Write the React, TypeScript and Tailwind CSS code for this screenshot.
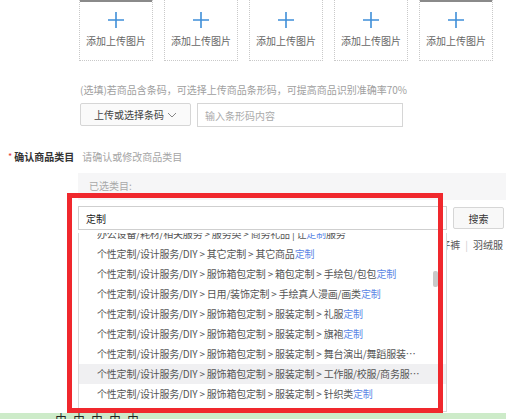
const rows = [
  { text: "办公设备/耗材/相关服务 > 服务类 > 商务礼品 | 让", hl: "定制", tail: "服务" },
  { text: "个性定制/设计服务/DIY > 其它定制 > 其它商品", hl: "定制" },
  { text: "个性定制/设计服务/DIY > 服饰箱包定制 > 箱包定制 > 手绘包/包包", hl: "定制" },
  { text: "个性定制/设计服务/DIY > 日用/装饰定制 > 手绘真人漫画/画类", hl: "定制" },
  { text: "个性定制/设计服务/DIY > 服饰箱包定制 > 服装定制 > 礼服", hl: "定制" },
  { text: "个性定制/设计服务/DIY > 服饰箱包定制 > 服装定制 > 旗袍", hl: "定制" },
  { text: "个性定制/设计服务/DIY > 服饰箱包定制 > 服装定制 > 舞台演出/舞蹈服装定制" },
  { text: "个性定制/设计服务/DIY > 服饰箱包定制 > 服装定制 > 工作服/校服/商务服定制", active: true },
  { text: "个性定制/设计服务/DIY > 服饰箱包定制 > 服装定制 > 针织类", hl: "定制" },
];

function UploadBox({ dark }: { dark?: boolean }) {
  return (
    <div className="w-[74px] h-[71px] border border-dotted border-[#c9c9c9] flex flex-col items-center">
      <div className={`w-full h-[2px] mt-[9px] ${dark ? "bg-[#8a8a8a]" : ""}`} />
      <svg width="18" height="18" viewBox="0 0 18 18" className="mt-[9px]">
        <path d="M9 1v16M1 9h16" stroke="#3f8fd9" strokeWidth="1.6" />
      </svg>
      <span className="mt-[5px] text-[10px] leading-[14px] text-[#666]">添加上传图片</span>
    </div>
  );
}

export default function App() {
  return (
    <div className="relative w-[506px] h-[419px] overflow-hidden bg-white font-['Noto_Sans_CJK_SC',sans-serif] text-[10px] text-[#333]">
      {/* upload slots */}
      <div className="flex gap-[11px] ml-[79px] -mt-[10px]">
        <UploadBox dark />
        <UploadBox />
        <UploadBox />
        <UploadBox />
        <UploadBox dark />
      </div>

      <p className="ml-[80px] mt-[22px] leading-[14px] text-[#a0a0a0]">
        (选填)若商品含条码，可选择上传商品条形码，可提高商品识别准确率70%
      </p>

      <div className="flex ml-[80px] mt-[6px] gap-[6px]">
        <button className="w-[111px] h-[23px] border border-[#d6d6d6] rounded-[2px] bg-[#fafafa] flex items-center justify-center gap-[3px] text-[#444]">
          上传或选择条码
          <svg width="10" height="6" viewBox="0 0 10 6">
            <path d="M1 1l4 4 4-4" fill="none" stroke="#888" strokeWidth="1" />
          </svg>
        </button>
        <div className="w-[206px] h-[24px] border border-[#d6d6d6] flex items-center px-[7px] text-[#aaa]">
          输入条形码内容
        </div>
      </div>

      <div className="flex items-center mt-[23px] ml-[8px] leading-[14px]">
        <span className="text-[#e4393c] text-[9px] mr-[2px]">*</span>
        <span className="font-bold text-[#333]">确认商品类目</span>
        <span className="ml-[8px] text-[#a5a5a5]">请确认或修改商品类目</span>
      </div>

      {/* category panel */}
      <div className="ml-[78px] mt-[9px]">
        <div className="h-[27px] bg-[#f6f6f7] flex items-center pl-[11px] pb-[3px] text-[#a8a8a8]">已选类目:</div>
        <div className="flex mt-[6px] gap-[6px]">
          <div className="w-[369px] h-[24px] border border-[#cfcfcf] flex items-center px-[7px] text-[#222]">定制</div>
          <button className="w-[51px] h-[22px] mt-[1px] border border-[#d6d6d6] rounded-[2px] bg-[#f8f8f8] text-[#333]">
            搜索
          </button>
        </div>
        <div className="flex justify-end pr-[3px] mt-[6px] leading-[18px] text-[#555] h-[177px]">
          <span>牛仔裤</span>
          <span className="mx-[5px] text-[#ccc]">|</span>
          <span>羽绒服</span>
        </div>
      </div>

      <div className="h-[6px] bg-[#cdebc9] overflow-hidden">
        <span className="block ml-[55px] text-[12px] leading-[12px] tracking-[6px] text-[#222]">由由由由由</span>
      </div>

      {/* dropdown results */}
      <div className="absolute left-[78px] top-[233px] w-[369px] h-[179px] bg-white border border-t-0 border-[#d9d9d9] overflow-hidden">
        <div className="-mt-[9px]">
          {rows.map((r, i) => (
            <div
              key={i}
              className={`h-[20px] leading-[20px] pl-[18px] pr-[26px] truncate tracking-[-0.2px] text-[#555] ${
                r.active ? "bg-[#f0f0f2]" : ""
              }`}
            >
              {r.text}
              {r.hl && <span className="text-[#5b86e5]">{r.hl}</span>}
              {r.tail}
            </div>
          ))}
        </div>
        <div className="absolute left-[354px] top-[38px] w-[5px] h-[16px] rounded-[2px] bg-[#c9c9c9]" />
      </div>

      {/* red annotation frame */}
      <div className="absolute left-[67px] top-[193px] w-[376px] h-[220px] border-[5px] border-[#f0282d] pointer-events-none" />
    </div>
  );
}
